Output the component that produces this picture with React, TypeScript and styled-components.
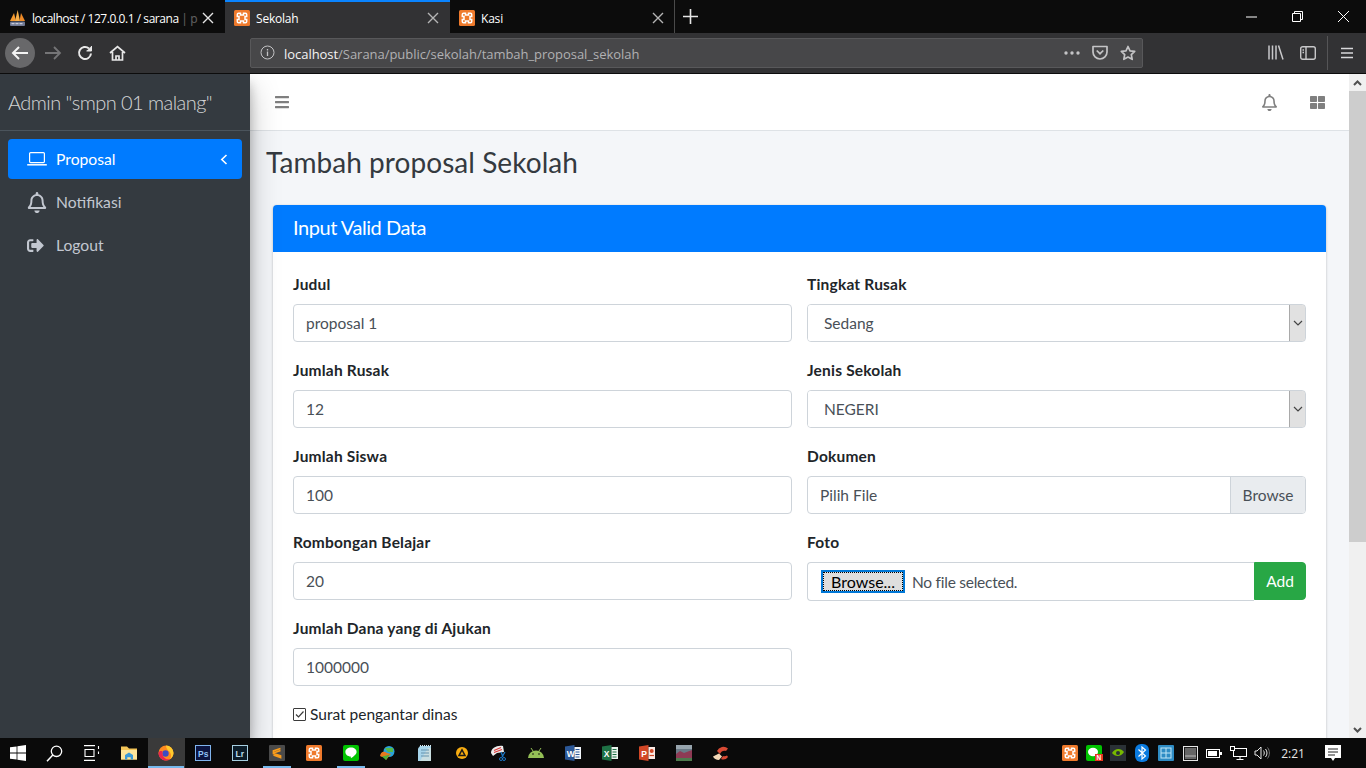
import React from "react";
import styled, { createGlobalStyle } from "styled-components";
import { FaBars, FaRegBell, FaThLarge, FaSignOutAlt } from "react-icons/fa";

const SANS = `"Lato", "Noto Sans", sans-serif`;
const UI = `"Open Sans", "Noto Sans", sans-serif`;

const Global = createGlobalStyle`
  html, body { margin: 0; padding: 0; height: 100%; overflow: hidden; background: #000; }
  * { box-sizing: border-box; }
`;

const Screen = styled.div`
  width: 1366px; height: 768px; display: flex; flex-direction: column; overflow: hidden;
  font-family: ${SANS};
`;

/* ---------- browser chrome ---------- */
const TabBar = styled.div`
  height: 33px; flex: none; display: flex; background: #0c0c0c; color: #fff;
  font-family: ${UI};
`;
const Tab = styled.div<{ $active?: boolean }>`
  width: 225px; height: 33px; flex: none; display: flex; align-items: center; padding: 1px 11px 0 9px; gap: 6px;
  font-size: 12px; letter-spacing: -0.2px; position: relative;
  background: ${(p) => (p.$active ? "#323234" : "transparent")};
  border-top: 2px solid ${(p) => (p.$active ? "#0a84ff" : "transparent")};
`;
const TabTitle = styled.span<{ $tight?: boolean }>`
  flex: 1; min-width: 0; white-space: nowrap;
  letter-spacing: ${(p) => (p.$tight ? "-0.45px" : "-0.2px")};
`;
const FadedPart = styled.span`opacity: 0.35;`;
const NewTab = styled.div`
  width: 32px; height: 33px; flex: none; display: flex; align-items: center; justify-content: center;
  border-left: 1px solid #4a4a4a; margin-left: -1px;
`;
const TabSpacer = styled.div`flex: 1;`;
const WinBtn = styled.div`
  width: 46px; height: 33px; flex: none; display: flex; align-items: center; justify-content: center;
`;
const ToolBar = styled.div`
  height: 41px; flex: none; display: flex; align-items: center; background: #323234;
  border-bottom: 1px solid #0c0c0c; padding-bottom: 1px;
`;
const NavGroup = styled.div`
  width: 250px; flex: none; display: flex; align-items: center; padding-left: 5px;
`;
const BackCircle = styled.div`
  width: 30px; height: 30px; border-radius: 50%; background: #68686a; display: flex;
  align-items: center; justify-content: center; margin-right: 2px;
`;
const ToolBtn = styled.div`
  width: 32px; height: 30px; flex: none; display: flex; align-items: center; justify-content: center;
`;
const UrlBar = styled.div`
  width: 893px; height: 30px; flex: none; display: flex; align-items: center; background: #474749;
  border: 1px solid #58585a; border-radius: 2px; padding: 0 0 0 9px;
`;
const UrlText = styled.div`
  flex: 1; margin-left: 9px; padding-top: 3px; font-family: ${UI}; font-size: 13px; letter-spacing: -0.04px; color: #b1b1b3; white-space: nowrap;
`;
const UrlHost = styled.span`color: #f4f4f4;`;
const ToolRight = styled.div`
  flex: 1; display: flex; align-items: center; padding-left: 117px;
`;
const ToolSep = styled.div`
  width: 1px; height: 34px; background: #555557; margin: 0 3px 0 3px;
`;

/* ---------- page ---------- */
const Viewport = styled.div`
  height: 664px; flex: none; display: flex; overflow: hidden; background: #f4f6f9;
`;
const Sidebar = styled.aside`
  width: 250px; flex: none; background: #343a40; position: relative; z-index: 2;
  box-shadow: 0 14px 28px rgba(0,0,0,.25), 0 10px 10px rgba(0,0,0,.22);
`;
const Brand = styled.div`
  height: 57px; border-bottom: 1px solid #4b545c; padding: 0 8px 1px; display: flex; align-items: center;
  color: rgba(255,255,255,.8); font-size: 20px; font-weight: 300; letter-spacing: -0.55px;
  white-space: nowrap;
`;
const NavList = styled.nav`
  padding: 8px 8px 0; display: flex; flex-direction: column; gap: 3px;
`;
const NavItem = styled.div<{ $active?: boolean }>`
  height: 40px; border-radius: 4px; display: flex; align-items: center; padding: 0 14px 0 19px;
  font-size: 15.7px; color: ${(p) => (p.$active ? "#fff" : "#c2c7d0")};
  background: ${(p) => (p.$active ? "#007bff" : "transparent")};
`;
const NavIcon = styled.span`
  width: 20px; margin-right: 9px; display: flex; align-items: center; justify-content: center; flex: none;
`;
const NavLabel = styled.span`flex: 1; padding-bottom: 1px;`;

const Content = styled.div`
  width: 1099px; flex: none; display: flex; flex-direction: column; overflow: hidden;
`;
const TopNav = styled.header`
  height: 57px; flex: none; background: #fff; border-bottom: 1px solid #dee2e6; display: flex;
  align-items: center; padding: 0 24px 0 24px; color: rgba(0,0,0,.5);
`;
const TopSpacer = styled.div`flex: 1;`;
const TopIcon = styled.span<{ $gap?: number }>`
  display: flex; margin-left: ${(p) => p.$gap ?? 0}px;
`;
const PageTitle = styled.h1`
  margin: 0; padding: 15px 16px 0; height: 74px; flex: none; font-size: 28px; line-height: 33px; font-weight: 400; color: #343a40;
  letter-spacing: 0.06px;
`;
const Card = styled.section`
  margin: 0 23px; background: #fff; border-radius: 4px 4px 0 0; box-shadow: 0 0 1px rgba(0,0,0,.125), 0 1px 3px rgba(0,0,0,.2);
  flex: none;
`;
const CardHead = styled.div`
  height: 47px; background: #007bff; color: #fff; border-radius: 4px 4px 0 0; padding: 0 20px 4px;
  display: flex; align-items: center; font-size: 20px; font-weight: 400; letter-spacing: -0.45px;
`;
const CardBody = styled.div`padding: 20px;`;
const Grid = styled.div`
  display: grid; grid-template-columns: 499px 499px; column-gap: 15px;
`;
const Col = styled.div`display: flex; flex-direction: column;`;
const Field = styled.div`height: 86px;`;
const Label = styled.label`
  display: block; height: 24px; line-height: 24px; margin-bottom: 8px; font-size: 15.5px; font-weight: 700; color: #212529;
  letter-spacing: 0.2px;
`;
const Input = styled.input`
  display: block; width: 100%; height: 38px; padding: 0 12px; border: 1px solid #ced4da; border-radius: 4px;
  font: 400 15.5px ${SANS}; color: #495057; background: #fff; outline: none;
`;
const SelectBox = styled.div`
  height: 38px; display: flex; border: 1px solid #ced4da; border-radius: 4px; background: #fff; overflow: hidden;
`;
const Select = styled.select`
  flex: 1; min-width: 0; appearance: none; border: none; outline: none; background: #fff; padding: 0 0 0 16px;
  font: 400 15.5px ${SANS}; color: #495057;
`;
const SelectArrow = styled.span`
  width: 17px; flex: none; background: #e1e1e1; border: 1px solid #a9a9a9; display: flex; align-items: center; justify-content: center;
  margin: -1px -1px -1px 0; border-radius: 0 3px 3px 0;
`;
const FileBox = styled.div`
  height: 38px; display: flex; border: 1px solid #ced4da; border-radius: 4px; overflow: hidden; font-size: 15.5px; color: #495057; line-height: 36px;
`;
const FileName = styled.span`flex: 1; padding-left: 12px;`;
const FileBrowse = styled.span`
  width: 75px; flex: none; background: #e9ecef; border-left: 1px solid #ced4da; text-align: center;
`;
const FotoRow = styled.div`display: flex; height: 39px;`;
const FotoBox = styled.div`
  flex: 1; border: 1px solid #ced4da; border-radius: 4px 0 0 4px; display: flex; align-items: center; padding-left: 13px;
  font-size: 15.5px; letter-spacing: -0.25px; color: #495057; border-right: none;
`;
const NativeBrowse = styled.button`
  width: 84px; height: 23px; margin-right: 7px; padding: 0; background: #dedede; border: 2px solid #0078d7; color: #000;
  font: 400 16px ${SANS}; outline: 1px dotted #000; outline-offset: -3px; line-height: 16px; letter-spacing: 0;
`;
const AddBtn = styled.button`
  width: 52px; height: 38px; padding: 0; background: #28a745; color: #fff; border: 1px solid #28a745; border-radius: 0 4px 4px 0;
  font: 400 15.5px ${SANS};
`;
const CheckRow = styled.label`
  display: flex; align-items: center; height: 24px; margin-top: 0; font-size: 15.5px; color: #212529; gap: 4px;
`;
const CheckBox = styled.span`
  width: 13px; height: 13px; border: 1px solid #3b3b3b; background: #fff; display: flex; border-radius: 1px;
`;

const Scrollbar = styled.div`
  width: 17px; flex: none; background: #f0f0f0; display: flex; flex-direction: column; position: relative; z-index: 3;
`;
const ScrollBtn = styled.div`
  height: 17px; flex: none; display: flex; align-items: center; justify-content: center;
`;
const ScrollThumb = styled.div`height: 451px; flex: none; background: #cdcdcd;`;
const ScrollGap = styled.div`flex: 1;`;

/* ---------- taskbar ---------- */
const Taskbar = styled.footer`
  height: 30px; flex: none; background: #0a0a0a; display: flex; align-items: stretch; color: #fff; position: relative; z-index: 4;
`;
const TaskBtn = styled.div<{ $on?: "full" | "short" }>`
  width: 37px; flex: none; display: flex; align-items: center; justify-content: center; position: relative; padding-right: 2px;
  background: ${(p) => (p.$on === "full" ? "#3a3a3a" : "transparent")};
  &::after {
    content: "";
    position: absolute; bottom: 0; height: 2px; background: #76b9ed;
    left: ${(p) => (p.$on === "full" ? "0" : "4px")}; right: ${(p) => (p.$on === "full" ? "1px" : "5px")};
    display: ${(p) => (p.$on ? "block" : "none")};
  }
`;
const TaskSpacer = styled.div`flex: 1;`;
const Tray = styled.div`
  width: 24px; flex: none; display: flex; align-items: center; justify-content: center;
`;
const Clock = styled.div`
  width: 38px; display: flex; align-items: center; justify-content: center; font-family: ${UI}; font-size: 12px;
  color: #e8e8e8;
`;
const NotifBtn = styled.div`
  width: 42px; margin-right: 12px; flex: none; display: flex; align-items: center; justify-content: center;
`;

/* ---------- icons ---------- */
const Xampp = ({ s = 16 }: { s?: number }) => (
  <svg width={s} height={s} viewBox="0 0 16 16">
    <rect width="16" height="16" rx="1.500" fill="#ef7a2c" />
    <path d="M4.500 3.300h2V5h3V3.300h2a1.200 1.200 0 0 1 1.200 1.200v2h-1.700v3h1.700v2a1.200 1.200 0 0 1-1.200 1.200h-2V11h-3v1.700h-2a1.200 1.200 0 0 1-1.200-1.200v-2H5v-3H3.300v-2a1.200 1.200 0 0 1 1.200-1.200z" fill="none" stroke="#fff" strokeWidth="1.500" />
  </svg>
);
const Pma = () => (
  <svg width="17" height="17" viewBox="0 0 17 17">
    <path d="M1 11 5 3l2 8z" fill="#f79a2e" />
    <path d="M6 11 8.700 0 11 11z" fill="#f7b04a" />
    <path d="M10.500 11 12 3l4 8z" fill="#ee8a26" />
    <rect x="1" y="11.500" width="15" height="4.500" rx="1" fill="#6f7893" />
    <path d="M2.500 13.700h12" stroke="#c8cbd8" strokeWidth="1.300" strokeDasharray="3 1" />
  </svg>
);

const Line = () => (
  <svg width="16" height="16" viewBox="0 0 16 16">
    <rect width="16" height="16" rx="2" fill="#00c300" />
    <path d="M8 2.600c3.200 0 5.600 1.900 5.600 4.300 0 2.300-3 4.500-5.600 6.300-.3-.9-.1-1.700-.3-1.800C4.700 11.300 2.400 9.400 2.400 6.900 2.400 4.500 4.800 2.600 8 2.600z" fill="#fff" />
  </svg>
);

const Office = ({ bg, page, letter }: { bg: string; page: string; letter: string }) => (
  <svg width="16" height="16" viewBox="0 0 16 16">
    <path d="M0 1.500 9.500 0v16L0 14.500z" fill={bg} />
    <path d="M9.500 2H16v12H9.500z" fill={page} />
    <path d="M10.500 4.500h4M10.500 7h4M10.500 9.500h4M10.500 12h4" stroke={bg} strokeWidth="1.200" />
    <text x="1.800" y="11.500" fontSize="8.500" fontWeight="700" fontFamily="Liberation Sans" fill="#fff">{letter}</text>
  </svg>
);

const taskApps: React.ReactNode[] = [
  <svg key="win" width="16" height="16" viewBox="0 0 16 16"><path d="M0 2.300 6.600 1.400v6.200H0zM7.400 1.300 16 0v7.600H7.400zM0 8.400h6.600v6.200L0 13.700zM7.400 8.400H16V16l-8.600-1.300z" fill="#fff" /></svg>,
  <svg key="search" width="17" height="17" viewBox="0 0 17 17"><circle cx="10.500" cy="6.300" r="5.200" fill="none" stroke="#fff" strokeWidth="1.300" /><path d="M6.800 10 1 16.300" stroke="#fff" strokeWidth="1.500" /></svg>,
  <svg key="tv" width="16" height="16" viewBox="0 0 16 16" fill="none" stroke="#fff" strokeWidth="1.100"><path d="M0 .6h11M0 15.400h11M1 4.500h9v7H1zM14.500 1v3M14.500 6.500v2.500" /></svg>,
  <svg key="folder" width="16" height="16" viewBox="0 0 16 16"><path d="M0 1.500h6l2 2h8v11H0z" fill="#f3c558" /><path d="M0 5h16v9.500H0z" fill="#fde59b" /><path d="M4 14.500V10l4-2.400L12 10v4.500H9.700v-2.300H6.300v2.300z" fill="#3a9ad9" /></svg>,
  <svg key="ff" width="16" height="16" viewBox="0 0 16 16"><circle cx="8" cy="8" r="7.500" fill="#ff8a1f" /><path d="M8 .5A7.500 7.500 0 0 1 15.500 8c0 2.500-1.500 5-3.500 6.300 2-3 1-7-1.500-8.300C9.500 5 8 3 8 .5z" fill="#ffcb2e" /><circle cx="7.500" cy="8.500" r="3.200" fill="#3d4cc4" /><path d="M.5 8a7.500 7.500 0 0 0 12 6C8 15.500 3.500 12 4.500 6.500 3 5.500 1 6 .5 8z" fill="#e8264f" /></svg>,
  <svg key="ps" width="16" height="16" viewBox="0 0 16 16"><rect x=".5" y=".5" width="15" height="15" fill="#0b1440" stroke="#80b4ee" /><text x="3" y="11.500" fontSize="8.500" fontWeight="700" fontFamily="Liberation Sans" fill="#8fc1f5">Ps</text></svg>,
  <svg key="lr" width="16" height="16" viewBox="0 0 16 16"><rect x=".5" y=".5" width="15" height="15" fill="#0b1c28" stroke="#a5cee0" /><text x="3.500" y="11.500" fontSize="8.500" fontWeight="700" fontFamily="Liberation Sans" fill="#b9dbe9">Lr</text></svg>,
  <svg key="subl" width="16" height="16" viewBox="0 0 16 16"><rect width="16" height="16" rx="1" fill="#4a4a4a" /><path d="M11.500 3.500 4.500 6v2.500l7 2.500v1.500L4.500 10M4.500 8l7-2.500" fill="none" stroke="#f89c1c" strokeWidth="1.800" /></svg>,
  <Xampp key="x" />,
  <Line key="line" />,
  <svg key="idm" width="17" height="16" viewBox="0 0 17 16"><circle cx="10" cy="6.500" r="5.500" fill="#2ba3d8" /><path d="M6 3h8v4H9z" fill="#57b947" /><path d="M1 11c1-5 4-5 7-3l4 1-5 6-1-2.500C4 12 2 12 1 11z" fill="#e8791e" /><path d="M3 11.500c3-1 6-1 8-2.500l-4 6z" fill="#4db03b" /></svg>,
  <svg key="np" width="15" height="16" viewBox="0 0 15 16"><path d="M3 1h11v15H1V3.500z" fill="#a7d4ea" /><path d="M11 3h3v13H3z" fill="#e5e5d8" opacity=".55" /><path d="M3 .5h11" stroke="#dbe9f0" strokeWidth="1.400" strokeDasharray="1 1" /><path d="M4 5h8M4 8h8M4 11h8" stroke="#6793ad" /></svg>,
  <svg key="aimp" width="12" height="12" viewBox="0 0 12 12"><circle cx="6" cy="6" r="6" fill="#f9ad11" /><path d="M6 2.800 9 8.400H3z" fill="none" stroke="#191919" strokeWidth="1.500" /></svg>,
  <svg key="snip" width="16" height="16" viewBox="0 0 16 16"><path d="M0 8C0 3 6 0 12 1l1 6-7 1-4 3z" fill="#ececec" /><path d="M3 5.500 10 2.500M3 7.500l8-3" stroke="#d93a3a" strokeWidth="1.200" /><path d="M10 7l2 5M14 7l-3 5" stroke="#1b76c4" strokeWidth="1.300" /><circle cx="10" cy="14" r="1.500" fill="none" stroke="#1b76c4" /><circle cx="13" cy="14" r="1.500" fill="none" stroke="#1b76c4" /></svg>,
  <svg key="and" width="16" height="10" viewBox="0 0 16 10"><path d="M0 10a8 7.500 0 0 1 16 0z" fill="#94bf56" /><path d="M3 0l2 3M13 0l-2 3" stroke="#94bf56" /><circle cx="5" cy="6" r=".8" fill="#0a0a0a" /><circle cx="11" cy="6" r=".8" fill="#0a0a0a" /></svg>,
  <Office key="w" bg="#2b5797" page="#f2f6fb" letter="W" />,
  <Office key="x2" bg="#1e7145" page="#eaf5ee" letter="X" />,
  <svg key="p" width="16" height="16" viewBox="0 0 16 16"><path d="M0 1.500 9.500 0v16L0 14.500z" fill="#d24726" /><path d="M9.500 2H16v12H9.500z" fill="#fbeae5" /><circle cx="12.700" cy="6" r="2" fill="#d24726" /><path d="M10.500 10.500h4.500" stroke="#d24726" strokeWidth="1.200" /><text x="2.200" y="11.500" fontSize="8.500" fontWeight="700" fontFamily="Liberation Sans" fill="#fff">P</text></svg>,
  <svg key="ph" width="16" height="16" viewBox="0 0 16 16"><rect width="16" height="16" fill="#6a7a86" /><path d="M0 9l4-3 4 2 8-3v8H0z" fill="#8e3a54" /><path d="M0 0h16v4H0z" fill="#97a4ad" /><path d="M0 13h16v3H0z" fill="#4d7a4d" /></svg>,
  <svg key="tool" width="16" height="16" viewBox="0 0 16 16"><path d="M15 3.500A7 7 0 0 0 4 6l3 3c1-3 4-4 6-3z" fill="#d84a34" /><path d="M15 12a6 6 0 0 1-7 2l2-3c1.500.5 3 .2 4-.6z" fill="#d84a34" /><path d="M0 11.500 6 8.500l3 3-3 3.500C3 15 1 13.500 0 11.500z" fill="#f3d9b8" /></svg>,
];

const CloseX = ({ c }: { c: string }) => (
  <svg width="12" height="12" viewBox="0 0 12 12" stroke={c} strokeWidth="1.400"><path d="M1 1l10 10M11 1 1 11" /></svg>
);
const SelectChevron = () => (
  <svg width="10" height="6" viewBox="0 0 10 6" fill="none" stroke="#444" strokeWidth="1.200"><path d="M1 1l4 4 4-4" /></svg>
);

export default function App() {
  return (
    <Screen>
      <Global />
      <TabBar>
        <Tab><Pma /><TabTitle $tight>localhost / 127.0.0.1 / sarana <FadedPart>| p</FadedPart></TabTitle><CloseX c="#e6e6e6" /></Tab>
        <Tab $active><Xampp /><TabTitle>Sekolah</TabTitle><CloseX c="#b5b5b5" /></Tab>
        <Tab><Xampp /><TabTitle>Kasi</TabTitle><CloseX c="#b5b5b5" /></Tab>
        <NewTab><svg width="15" height="15" viewBox="0 0 15 15" stroke="#e6e6e6" strokeWidth="1.600"><path d="M7.500 0v15M0 7.500h15" /></svg></NewTab>
        <TabSpacer />
        <WinBtn><svg width="11" height="2" viewBox="0 0 11 2"><path d="M0 1h11" stroke="#fff" /></svg></WinBtn>
        <WinBtn><svg width="11" height="11" viewBox="0 0 11 11" fill="none" stroke="#fff"><path d="M.5 2.500h8v8h-8zM2.500 2.500v-2h8v8h-2" /></svg></WinBtn>
        <WinBtn><svg width="11" height="11" viewBox="0 0 11 11" stroke="#fff"><path d="M0 0l11 11M11 0 0 11" /></svg></WinBtn>
      </TabBar>
      <ToolBar>
        <NavGroup>
          <BackCircle><svg width="18" height="16" viewBox="0 0 18 16" fill="none" stroke="#f4f4f4" strokeWidth="2"><path d="M17 8H2M8 2 2 8l6 6" /></svg></BackCircle>
          <ToolBtn><svg width="18" height="16" viewBox="0 0 18 16" fill="none" stroke="#757577" strokeWidth="1.800"><path d="M1 8h15M10 2l6 6-6 6" /></svg></ToolBtn>
          <ToolBtn><svg width="16" height="16" viewBox="0 0 16 16" fill="none" stroke="#e8e8e8" strokeWidth="2"><path d="M14 8.500A6 6 0 1 1 12 3.500" /><path d="M14.500 1v5h-5" fill="#e8e8e8" strokeWidth="1" /></svg></ToolBtn>
          <ToolBtn><svg width="17" height="16" viewBox="0 0 17 16" fill="none" stroke="#e8e8e8" strokeWidth="1.700"><path d="M1 8l7.500-6.500L16 8M3.500 7v8h10V7" /><path d="M7 15v-4h3v4" /></svg></ToolBtn>
        </NavGroup>
        <UrlBar>
          <svg width="15" height="15" viewBox="0 0 15 15" fill="none" stroke="#c4c4c6"><circle cx="7.500" cy="7.500" r="6.500" /><path d="M7.500 6.500v4.500M7.500 4v1.500" strokeWidth="1.300" /></svg>
          <UrlText><UrlHost>localhost</UrlHost>/Sarana/public/sekolah/tambah_proposal_sekolah</UrlText>
          <svg width="16" height="4" viewBox="0 0 16 4" fill="#c4c4c6" style={{ marginRight: 12 }}><circle cx="2" cy="2" r="1.700" /><circle cx="8" cy="2" r="1.700" /><circle cx="14" cy="2" r="1.700" /></svg>
          <svg width="16" height="15" viewBox="0 0 16 15" fill="none" stroke="#c4c4c6" strokeWidth="1.700" style={{ marginRight: 12 }}><path d="M1 1.500h14V7a7 7 0 0 1-14 0z" strokeLinejoin="round" /><path d="M4.700 5.500 8 8.700l3.300-3.200" /></svg>
          <svg width="16" height="16" viewBox="0 0 16 16" fill="none" stroke="#c4c4c6" strokeWidth="1.700" style={{ marginRight: 6 }}><path d="M8 1.500l2 4.300 4.700.6-3.400 3.200.9 4.700L8 12l-4.200 2.300.9-4.700L1.300 6.400 6 5.800z" strokeLinejoin="round" /></svg>
        </UrlBar>
        <ToolRight>
          <ToolBtn><svg width="16" height="15" viewBox="0 0 16 15" fill="none" stroke="#c8c8ca" strokeWidth="1.500"><path d="M1 .5v14M4.500.5v14M8 .5v14M10.500.5l4.500 14" /></svg></ToolBtn>
          <ToolBtn><svg width="16" height="14" viewBox="0 0 16 14" fill="none" stroke="#c8c8ca" strokeWidth="1.400"><rect x=".7" y=".7" width="14.600" height="12.600" rx="2" /><path d="M6 .7v12.600M2.500 4H4M2.500 6.500H4" /></svg></ToolBtn>
          <ToolSep />
          <ToolBtn><svg width="12" height="12" viewBox="0 0 12 12" stroke="#d8d8da" strokeWidth="1.700"><path d="M0 1.500h12M0 6h12M0 10.500h12" /></svg></ToolBtn>
        </ToolRight>
      </ToolBar>
      <Viewport>
        <Sidebar>
          <Brand>Admin "smpn 01 malang"</Brand>
          <NavList>
            <NavItem $active>
              <NavIcon><svg width="20" height="14" viewBox="0 0 20 14" fill="none" stroke="#fff" strokeWidth="1.200"><rect x="2.600" y=".6" width="14.800" height="10" rx="1" /><path d="M.2 12.800h19.600" strokeWidth="1.500" /></svg></NavIcon>
              <NavLabel>Proposal</NavLabel>
              <svg width="8" height="11" viewBox="0 0 8 11" fill="none" stroke="#fff" strokeWidth="1.600"><path d="M6.500 1 1.800 5.500l4.700 4.500" /></svg>
            </NavItem>
            <NavItem>
              <NavIcon><FaRegBell size={21} color="#c2c7d0" /></NavIcon>
              <NavLabel>Notifikasi</NavLabel>
            </NavItem>
            <NavItem>
              <NavIcon><FaSignOutAlt size={17} color="#c2c7d0" style={{ transform: "translateX(-2px)" }} /></NavIcon>
              <NavLabel>Logout</NavLabel>
            </NavItem>
          </NavList>
        </Sidebar>
        <Content>
          <TopNav>
            <FaBars size={16} />
            <TopSpacer />
            <TopIcon><FaRegBell size={17} /></TopIcon>
            <TopIcon $gap={32}><FaThLarge size={15} /></TopIcon>
          </TopNav>
          <PageTitle>Tambah proposal Sekolah</PageTitle>
          <Card>
            <CardHead>Input Valid Data</CardHead>
            <CardBody>
              <Grid>
                <Col>
                  <Field><Label>Judul</Label><Input readOnly value="proposal 1" /></Field>
                  <Field><Label>Jumlah Rusak</Label><Input readOnly value="12" /></Field>
                  <Field><Label>Jumlah Siswa</Label><Input readOnly value="100" /></Field>
                  <Field><Label>Rombongan Belajar</Label><Input readOnly value="20" /></Field>
                  <Field><Label>Jumlah Dana yang di Ajukan</Label><Input readOnly value="1000000" /></Field>
                </Col>
                <Col>
                  <Field><Label>Tingkat Rusak</Label>
                    <SelectBox><Select defaultValue="Sedang"><option>Sedang</option></Select>
                      <SelectArrow><SelectChevron /></SelectArrow></SelectBox></Field>
                  <Field><Label>Jenis Sekolah</Label>
                    <SelectBox><Select defaultValue="NEGERI"><option>NEGERI</option></Select>
                      <SelectArrow><SelectChevron /></SelectArrow></SelectBox></Field>
                  <Field><Label>Dokumen</Label>
                    <FileBox><FileName>Pilih File</FileName><FileBrowse>Browse</FileBrowse></FileBox></Field>
                  <Field><Label>Foto</Label>
                    <FotoRow><FotoBox><NativeBrowse>Browse...</NativeBrowse>No file selected.</FotoBox><AddBtn>Add</AddBtn></FotoRow></Field>
                </Col>
              </Grid>
              <CheckRow>
                <CheckBox><svg width="11" height="11" viewBox="0 0 11 11" fill="none" stroke="#3b3b3b" strokeWidth="1.200"><path d="M2 5.500 4.500 8 9.500 2.500" /></svg></CheckBox>
                Surat pengantar dinas
              </CheckRow>
            </CardBody>
          </Card>
        </Content>
        <Scrollbar>
          <ScrollBtn><svg width="9" height="6" viewBox="0 0 9 6" fill="none" stroke="#505050" strokeWidth="2"><path d="M1 5l3.500-3.500L8 5" /></svg></ScrollBtn>
          <ScrollThumb />
          <ScrollGap />
          <ScrollBtn><svg width="9" height="6" viewBox="0 0 9 6" fill="none" stroke="#505050" strokeWidth="2"><path d="M1 1l3.500 3.500L8 1" /></svg></ScrollBtn>
        </Scrollbar>
      </Viewport>
      <Taskbar>
        {taskApps.map((a, i) => (
          <TaskBtn key={i} $on={i === 4 ? "full" : i === 7 || i === 9 ? "short" : undefined}>{a}</TaskBtn>
        ))}
        <TaskSpacer />
        <Tray><Xampp /></Tray>
        <Tray><svg width="17" height="16" viewBox="0 0 17 16"><rect width="16" height="16" rx="2" fill="#00c300" /><ellipse cx="7" cy="7" rx="5" ry="4.200" fill="#fff" /><rect x="9" y="9" width="8" height="7" fill="#e8351f" /><text x="10.500" y="15" fontSize="6.500" fontWeight="700" fontFamily="Liberation Sans" fill="#fff">N</text></svg></Tray>
        <Tray><svg width="16" height="16" viewBox="0 0 16 16"><rect width="16" height="16" fill="#2a3136" /><path d="M2 8c3-5 9-5 12-1-3 5-9 5-12 1z" fill="#76b900" /><circle cx="8" cy="8" r="2" fill="#2a3136" /></svg></Tray>
        <Tray><svg width="14" height="18" viewBox="0 0 14 18"><rect width="14" height="18" rx="6" fill="#0a7be0" /><path d="M3.500 5.500l7 6.500L7 15V3l3.500 3-7 6.500" fill="none" stroke="#fff" strokeWidth="1.200" /></svg></Tray>
        <Tray><svg width="16" height="16" viewBox="0 0 16 16"><rect width="16" height="16" rx="1" fill="#2e8cc4" /><rect x="3" y="3" width="10" height="10" fill="none" stroke="#bfe6f7" /><path d="M3 8h10M8 3v10" stroke="#bfe6f7" /></svg></Tray>
        <Tray><svg width="15" height="15" viewBox="0 0 15 15"><rect x=".5" y=".5" width="14" height="14" fill="#1a1a1a" stroke="#e6e6e6" /><rect x="2" y="2" width="11" height="11" fill="#666" /><path d="M2 10h11" stroke="#bbb" /></svg></Tray>
        <Tray><svg width="16" height="9" viewBox="0 0 16 9"><rect x=".5" y=".5" width="13" height="8" fill="none" stroke="#fff" /><rect x="2" y="2" width="9" height="5" fill="#fff" /><rect x="14" y="3" width="2" height="3" fill="#fff" /></svg></Tray>
        <Tray><svg width="17" height="14" viewBox="0 0 17 14" fill="none" stroke="#fff"><rect x="3.500" y="2.500" width="13" height="8" /><path d="M10 10.500v3M6.500 13.500h7" /><rect x=".5" y=".5" width="4" height="4" fill="#0a0a0a" /></svg></Tray>
        <Tray><svg width="16" height="14" viewBox="0 0 16 14" fill="none" stroke="#e6e6e6"><path d="M1 5h2l4-4v12l-4-4H1zM9.500 4.500c1 1.500 1 3.500 0 5M11.500 3c2 2.500 2 5.500 0 8" /><path d="M13.500 1.500c2.500 3 2.500 8 0 11" stroke="#777" /></svg></Tray>
        <Clock>2:21</Clock>
        <NotifBtn><svg width="16" height="16" viewBox="0 0 16 16"><path d="M0 0h16v13h-6l-2 3-2-3H0z" fill="#fff" /><path d="M3 4h10M3 7h10M3 10h7" stroke="#222" /></svg></NotifBtn>
      </Taskbar>
    </Screen>
  );
}
